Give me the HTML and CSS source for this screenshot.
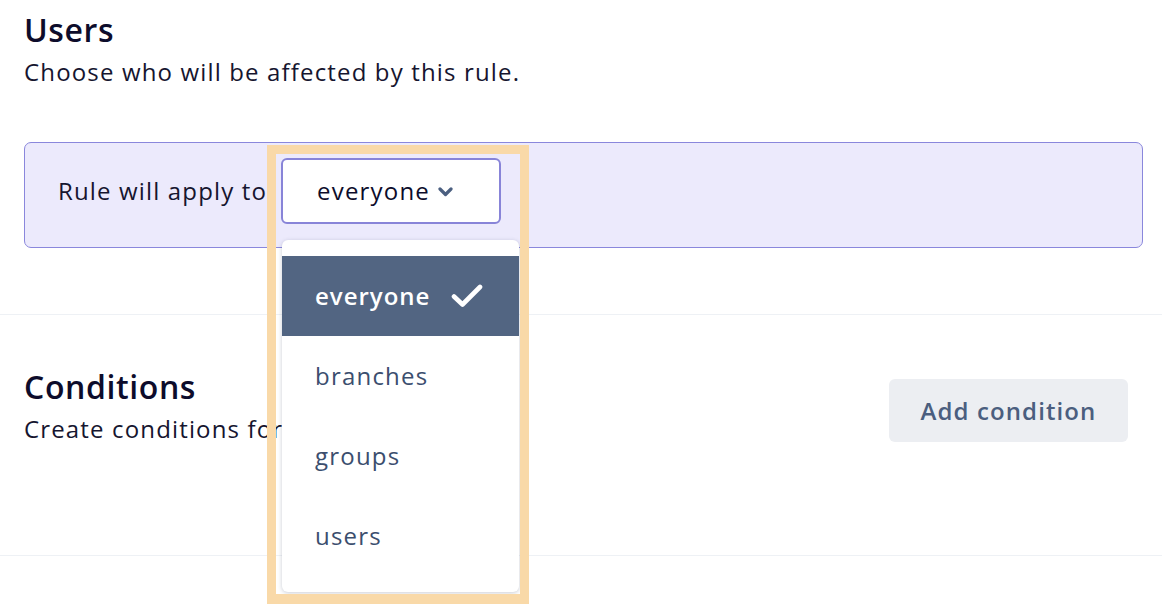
FILE: index.html
```html
<!DOCTYPE html>
<html>
<head>
<meta charset="utf-8">
<link rel="stylesheet" href="styles.css">
</head>
<body>
<section class="section section-users">
  <h1 class="title">Users</h1>
  <p class="subtitle">Choose who will be affected by this rule.</p>
  <div class="apply-box">
    <span class="apply-label">Rule will apply to</span>
    <div class="select-wrap">
      <div class="select">
        <span class="select-value">everyone</span>
        <svg class="chevron" width="15" height="10" viewBox="0 0 15 10"><polyline points="2,2 7.5,7.5 13,2" fill="none" stroke="#4b5f80" stroke-width="3.2" stroke-linejoin="round" stroke-linecap="round"/></svg>
      </div>
      <ul class="menu">
        <li class="menu-item selected"><span>everyone</span>
          <svg class="check" width="32" height="24" viewBox="0 0 32 24"><path d="M3 12.5 L11.5 20.5 L29 3" fill="none" stroke="#fff" stroke-width="4.6" stroke-linecap="round" stroke-linejoin="round"/></svg>
        </li>
        <li class="menu-item"><span>branches</span></li>
        <li class="menu-item"><span>groups</span></li>
        <li class="menu-item"><span>users</span></li>
      </ul>
      <div class="highlight"></div>
    </div>
  </div>
</section>
<section class="section section-conditions">
  <div class="cond-text">
    <h2 class="title">Conditions</h2>
    <p class="subtitle">Create conditions for</p>
  </div>
  <button class="add-btn">Add condition</button>
</section>
</body>
</html>
```
FILE: styles.css
```css
* { box-sizing: border-box; }
html, body { margin: 0; padding: 0; background: #fff; }
body {
  width: 1162px;
  height: 606px;
  overflow: hidden;
  font-family: "Open Sans", "Liberation Sans", sans-serif;
  color: #0f0e2c;
}
.section {
  border-bottom: 1.5px solid #eef1f5;
}
.section-users {
  padding: 10px 19px 66px 24px;
}
.title {
  margin: 0;
  font-size: 32px;
  line-height: 40px;
  font-weight: 600;
  letter-spacing: 0.6px;
  color: #0d0c2b;
}
.subtitle {
  margin: 6px 0 0;
  font-size: 24px;
  line-height: 32px;
  font-weight: 400;
  letter-spacing: 1.15px;
  color: #16152f;
}
.apply-box {
  margin-top: 54px;
  height: 106px;
  display: flex;
  align-items: flex-start;
  gap: 14px;
  padding: 14.5px 33px 0;
  background: #eceafc;
  border: 1.5px solid #8a87dc;
  border-radius: 7px;
}
.apply-label {
  font-size: 24px;
  line-height: 66px;
  letter-spacing: 1.15px;
  color: #16152f;
}
.select-wrap {
  position: relative;
}
.select {
  width: 220px;
  height: 66px;
  display: flex;
  align-items: center;
  gap: 8px;
  padding-left: 34px;
  background: #fff;
  border: 2.5px solid #8884d8;
  border-radius: 6px;
  font-size: 24px;
  letter-spacing: 1.2px;
  color: #0d0c2b;
}
.chevron { margin-top: 2px; }
.menu {
  position: absolute;
  left: 1px;
  top: 82px;
  width: 237px;
  margin: 0;
  padding: 16px 0;
  list-style: none;
  background: #fff;
  border-radius: 6px;
  box-shadow: 0 1px 4px rgba(60, 72, 100, 0.28);
  z-index: 2;
}
.menu-item {
  height: 80px;
  display: flex;
  align-items: center;
  padding: 0 36px 0 33px;
  font-size: 24px;
  letter-spacing: 1.2px;
  color: #3b4e6e;
}
.menu-item.selected {
  background: #526582;
  color: #fff;
  font-weight: 600;
  letter-spacing: 1px;
}
.check { margin-left: auto; }
.highlight {
  position: absolute;
  left: -14px;
  top: -13px;
  width: 262px;
  height: 459px;
  border: 9px solid #f9d9a8;
  border-bottom-width: 10px;
  z-index: 3;
  pointer-events: none;
}
.section-conditions {
  height: 241px;
  display: flex;
  justify-content: space-between;
  align-items: flex-start;
  padding: 52px 34px 0 24px;
}
.add-btn {
  margin-top: 12px;
  width: 239px;
  height: 63px;
  border: none;
  border-radius: 6px;
  background: #eceef2;
  color: #4b5e7f;
  font-family: inherit;
  font-size: 24px;
  font-weight: 600;
  letter-spacing: 1.1px;
}
```
